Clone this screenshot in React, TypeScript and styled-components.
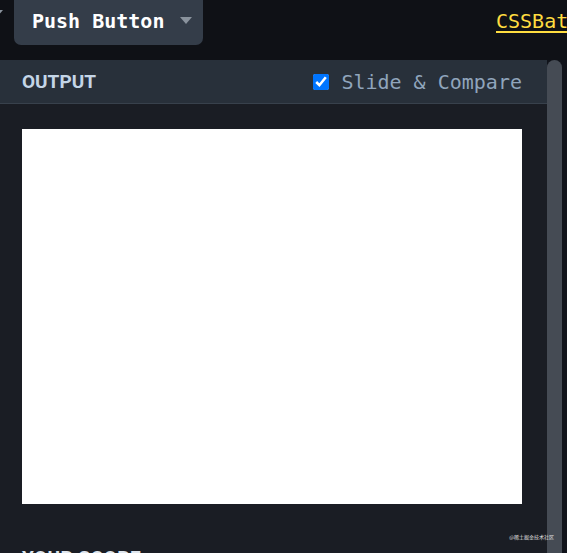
import React from "react";
import styled, { createGlobalStyle } from "styled-components";

const Global = createGlobalStyle`
  html, body { margin: 0; padding: 0; background: #0f1116; overflow: hidden; }
  body { width: 567px; height: 553px; }
  #root { width: 567px; height: 553px; overflow: hidden; position: relative; }
`;

const TopBar = styled.div`
  height: 60px;
  display: flex;
  align-items: flex-start;
  overflow: hidden;
  background: #0f1116;
`;

const Caret = styled.span<{ $color: string }>`
  display: inline-block;
  flex-shrink: 0;
  width: 0;
  height: 0;
  border-left: 6px solid transparent;
  border-right: 6px solid transparent;
  border-top: 7px solid ${(p) => p.$color};
`;

const PrevTab = styled.div`
  flex-shrink: 0;
  margin-left: -9px;
  margin-top: 10px;
  width: 23px;
  display: flex;
`;

const Tab = styled.div`
  flex-shrink: 0;
  width: 189px;
  height: 45px;
  box-sizing: border-box;
  background: #343d49;
  border-radius: 0 0 7px 7px;
  display: flex;
  align-items: center;
  padding: 0 12px 4px 18px;
  gap: 16px;
`;

const TabLabel = styled.span`
  font-family: "DejaVu Sans Mono", monospace;
  font-weight: 700;
  font-size: 20px;
  color: #ffffff;
  white-space: nowrap;
`;

const BrandLink = styled.a`
  flex-shrink: 0;
  font-family: "DejaVu Sans Mono", monospace;
  font-size: 20px;
  color: #ffdd40;
  text-decoration: underline;
  text-underline-offset: 3px;
  text-decoration-thickness: 2px;
  margin-top: 9px;
  margin-left: 293px;
  white-space: nowrap;
`;

const Main = styled.div`
  display: flex;
  height: 493px;
`;

const Panel = styled.div`
  width: 547px;
  background: #1a1d24;
  display: flex;
  flex-direction: column;
  overflow: hidden;
`;

const PanelHeader = styled.div`
  flex-shrink: 0;
  height: 43px;
  border-bottom: 1px solid #38414c;
  background: #28303a;
  display: flex;
  align-items: center;
  padding: 0 25px 0 22px;
`;

const HeaderTitle = styled.h2`
  margin: 0;
  font-family: Roboto, "Liberation Sans", sans-serif;
  font-weight: 700;
  font-size: 19px;
  color: #c4d5e7;
  letter-spacing: 0;
  flex: 1;
`;

const Toggle = styled.label`
  display: flex;
  align-items: center;
  gap: 12px;
  font-family: "DejaVu Sans Mono", monospace;
  font-size: 20px;
  color: #90a5bc;
  white-space: nowrap;
`;

const Check = styled.input`
  width: 16px;
  height: 16px;
  margin: 0 0 0 1px;
  accent-color: #0075ff;
`;

const Body = styled.div`
  flex-shrink: 0;
  padding: 25px 25px 0 22px;
  display: flex;
  flex-direction: column;
`;

const Output = styled.div`
  width: 500px;
  height: 375px;
  background: #ffffff;
`;

const SectionTitle = styled.h2`
  margin: 42px 0 0;
  font-family: Roboto, "Liberation Sans", sans-serif;
  font-weight: 700;
  font-size: 19px;
  color: #dfe6ee;
  letter-spacing: 0.5px;
`;

const Track = styled.div`
  width: 20px;
  background: #10131a;
  display: flex;
`;

const Thumb = styled.div`
  width: 15px;
  background: #454b54;
  border-radius: 8px 8px 0 0;
`;

const Watermark = styled.div`
  position: absolute;
  right: 13px;
  top: 533px;
  font-family: "Noto Sans CJK SC", sans-serif;
  font-size: 5px;
  color: #e0e0e0;
  white-space: nowrap;
`;

export default function App() {
  return (
    <>
      <Global />
      <TopBar>
        <PrevTab>
          <Caret $color="#8a939d" />
        </PrevTab>
        <Tab>
          <TabLabel>Push Button</TabLabel>
          <Caret $color="#8a939d" />
        </Tab>
        <BrandLink href="#">CSSBattle</BrandLink>
      </TopBar>
      <Main>
        <Panel>
          <PanelHeader>
            <HeaderTitle>OUTPUT</HeaderTitle>
            <Toggle>
              <Check type="checkbox" defaultChecked />
              Slide &amp; Compare
            </Toggle>
          </PanelHeader>
          <Body>
            <Output />
            <SectionTitle>YOUR SCORE</SectionTitle>
          </Body>
        </Panel>
        <Track>
          <Thumb />
        </Track>
      </Main>
      <Watermark>@稀土掘金技术社区</Watermark>
    </>
  );
}
